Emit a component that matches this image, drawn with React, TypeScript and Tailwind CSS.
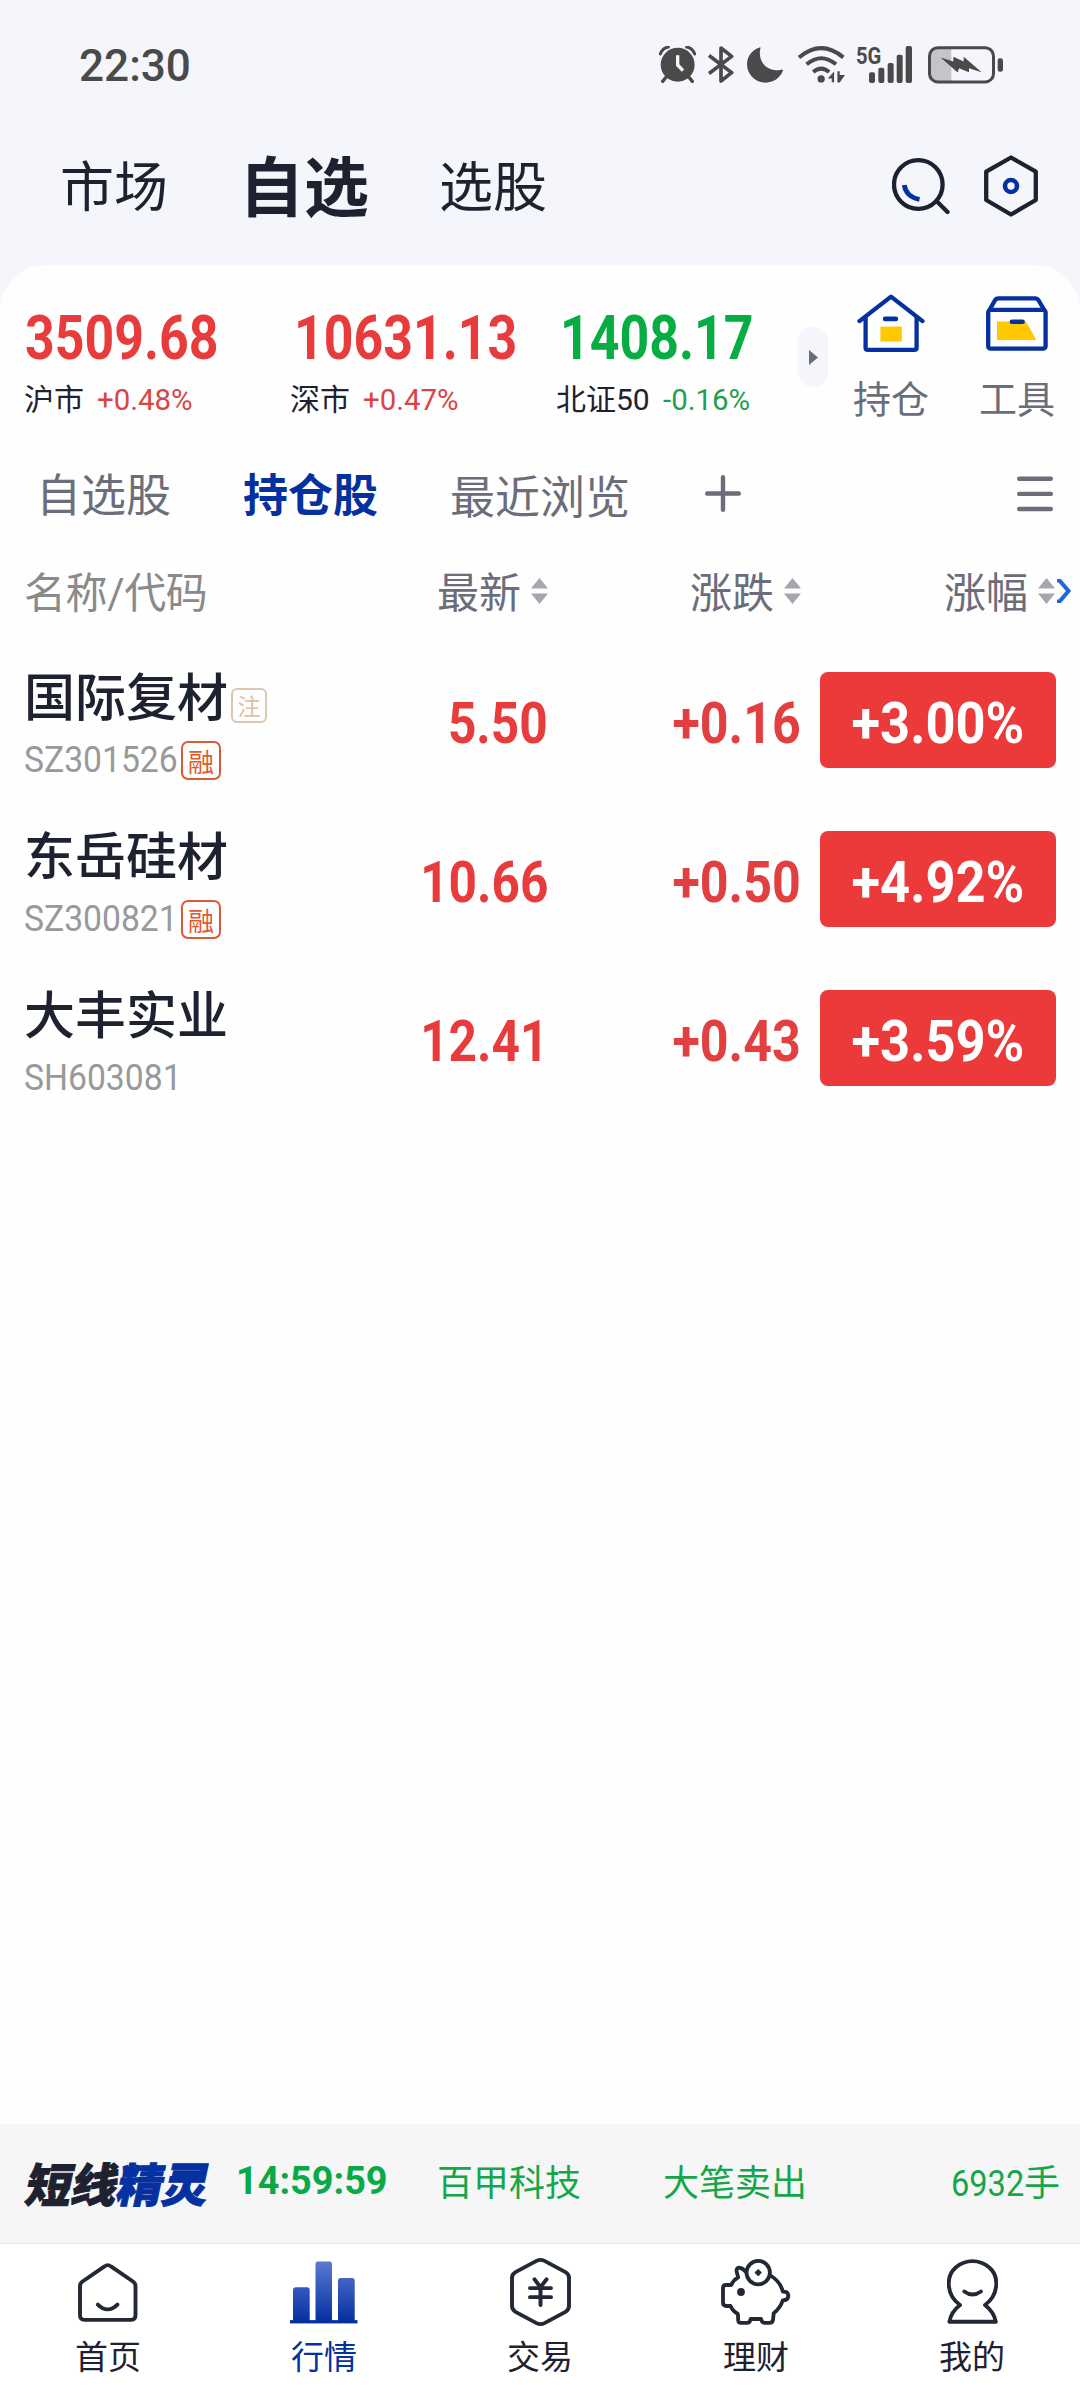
import type { ReactNode } from 'react'

const indices = [
  { value: '3509.68', name: '沪市', change: '+0.48%', up: true, indent: 'pl-px' },
  { value: '10631.13', name: '深市', change: '+0.47%', up: true, indent: 'pl-1' },
  { value: '1408.17', name: '北证50', change: '-0.16%', up: false, indent: 'pl-1' },
]

const stocks = [
  { name: '国际复材', code: 'SZ301526', note: true, margin: true, price: '5.50', diff: '+0.16', pct: '+3.00%' },
  { name: '东岳硅材', code: 'SZ300821', note: false, margin: true, price: '10.66', diff: '+0.50', pct: '+4.92%' },
  { name: '大丰实业', code: 'SH603081', note: false, margin: false, price: '12.41', diff: '+0.43', pct: '+3.59%' },
]

function StatusBar() {
  return (
    <div className="flex h-[129px] items-center text-[#4a4a4a]">
      <div className="w-[580px] pt-0.5 pl-[79px] text-[45px] leading-none font-medium">
        <span className="inline-block origin-left scale-x-[0.98]">22:30</span>
      </div>
      <div className="flex items-center pl-[79px]">
        {/* Alarm */}
        <svg width="37" height="37" viewBox="0 0 111 111" fill="none" stroke="currentColor">
          <circle cx="56" cy="56" r="51" fill="currentColor" stroke="none" />
          <path d="M4 24Q10 6 28 3M107 24Q101 6 83 3" strokeWidth="9" strokeLinecap="round" />
          <path d="M20 95L11 106M91 95L100 106" strokeWidth="10" strokeLinecap="round" />
          <path d="M56 28V57L72 74" stroke="#f5f6fb" strokeWidth="10" />
        </svg>
        {/* Bluetooth */}
        <svg className="ml-3" width="26" height="37" viewBox="0 0 76 111" fill="none" stroke="currentColor" strokeWidth="11" strokeLinejoin="round">
          <path d="M2 28L70 80L38 105V6L70 31L2 83" />
        </svg>
        {/* Moon */}
        <svg className="ml-[13px]" width="36" height="36" viewBox="0 0 108 108" fill="currentColor">
          <path d="M36 2Q42-1 40 5C31 44 62 78 102 68Q110 67 107 73C99 93 79 107 56 107C25 107 0 83 0 52C0 28 15 9 36 2Z" />
        </svg>
        {/* Wifi */}
        <svg className="ml-[15px]" width="47" height="37" viewBox="0 0 142 111" fill="none" stroke="currentColor" strokeWidth="12">
          <path d="M3 34Q70-22 137 34M26 55Q70 18 115 55M46 78Q70 58 94 78" />
          <circle cx="70" cy="99" r="11" fill="currentColor" stroke="none" />
          <path d="M90 98L109 77V109H102V98ZM119 76H126V87H142L126 110H119Z" fill="currentColor" stroke="none" />
        </svg>
        {/* 5G signal */}
        <svg className="ml-[11px] overflow-visible" width="57" height="37" viewBox="0 0 171 111" fill="currentColor">
          <text x="0" y="54" fontFamily="Roboto" fontWeight="700" fontSize="73" textLength="76" lengthAdjust="spacingAndGlyphs">5G</text>
          <rect x="39" y="79" width="18" height="32" rx="6" />
          <rect x="67" y="65" width="18" height="46" rx="6" />
          <rect x="95" y="51" width="18" height="60" rx="6" />
          <rect x="122" y="26" width="18" height="85" rx="6" />
          <rect x="149" y="0" width="19" height="111" rx="6" />
        </svg>
        {/* Battery */}
        <svg className="ml-[15px]" width="75" height="38" viewBox="0 0 225 113">
          <path d="M30 6H70V107H30Q6 107 6 83V30Q6 6 30 6Z" fill="#c4c4ca" />
          <rect x="4.5" y="4.5" width="192" height="103" rx="25" fill="none" stroke="currentColor" strokeWidth="9" />
          <path d="M38 34L76 46V32L107 46V32L161 78L123 66V78L93 66L89 79Z" fill="currentColor" />
          <rect x="209" y="36" width="16" height="41" rx="7" fill="currentColor" />
        </svg>
      </div>
    </div>
  )
}

function TopNav() {
  return (
    <div className="h-[136px] text-[#1e2130]">
      <div className="flex h-[120px] items-center">
        <span className="ml-[60px] w-[179px] text-[54px] leading-none">市场</span>
        <span className="w-[200px] text-[65px] leading-none font-bold">自选</span>
        <span className="w-[453px] text-[54px] leading-none">选股</span>
        <svg className="mb-1.5" width="58" height="56" viewBox="0 0 58 56" fill="none" strokeLinecap="round">
          <circle cx="26.3" cy="26.5" r="24.3" stroke="#1e2130" strokeWidth="4.3" />
          <path d="M44.5 43L55.5 54" stroke="#1e2130" strokeWidth="4.3" />
          <path d="M12.3 27Q14 39 27.5 41.3" stroke="#0530a0" strokeWidth="4.8" strokeLinecap="butt" />
        </svg>
        <svg className="mb-1.5 ml-[34px]" width="54" height="62" viewBox="0 0 54 62" fill="none">
          <path d="M27 2.5L51.8 16.7V45L27 59.5L2.2 45V16.7Z" stroke="#1e2130" strokeWidth="4.3" strokeLinejoin="round" />
          <circle cx="27" cy="31" r="6" stroke="#0530a0" strokeWidth="4.6" />
        </svg>
      </div>
    </div>
  )
}

function IndexStrip() {
  return (
    <div className="flex h-[194px] items-start">
      <div className="flex w-[798px] shrink-0 pl-6">
        {indices.map(item => (
          <div key={item.name} className="w-[266px] shrink-0 pt-[43px] last:w-[242px]">
            <div className={`text-[61px] leading-none font-bold ${item.indent} ${item.up ? 'text-[#e83c3c]' : 'text-[#05ad42]'}`}>
              <span className="inline-block origin-left scale-x-[0.85]">{item.value}</span>
            </div>
            <div className="mt-4 flex items-center text-[30px] leading-none whitespace-nowrap">
              <span className="text-[#1e2130]">{item.name}</span>
              <span className={`ml-[13px] inline-block origin-left scale-x-[0.98] ${item.up ? 'text-[#d94545]' : 'text-[#1fa04c]'}`}>
                {item.change}
              </span>
            </div>
          </div>
        ))}
      </div>
      <div className="mt-[62px] flex h-[60px] w-[30px] items-center justify-center rounded-full bg-[#f5f6fb]">
        <svg width="9" height="15" viewBox="0 0 9 15" fill="#6b6e7a">
          <path d="M0 0L9 7.5L0 15Z" />
        </svg>
      </div>
      <Shortcut label="持仓" className="ml-[24px]">
        <svg width="68" height="58" viewBox="0 0 68 60" preserveAspectRatio="none" fill="none" stroke="#0530a0" strokeWidth="4.3" strokeLinecap="round" strokeLinejoin="round">
          <path d="M2.5 28L34 2.8L65.5 28" />
          <path d="M8.6 24V55.5Q8.6 57.8 11 57.8H57.2Q59.6 57.8 59.6 55.5V24" />
          <path d="M23.4 33.7H44.8V49.2H23.4Z" fill="#ffc800" stroke="none" />
          <path d="M28.2 25.8H38.8" strokeWidth="4.8" />
        </svg>
      </Shortcut>
      <Shortcut label="工具" className="ml-[48px]">
        <svg width="62" height="58" viewBox="0 -2.5 62 60" preserveAspectRatio="none" fill="none" stroke="#0530a0" strokeWidth="4.3" strokeLinecap="round" strokeLinejoin="round">
          <path d="M3.5 14L9 4Q10 2 12.5 2H49Q51.3 2 52.5 4L58.3 14" />
          <rect x="2.2" y="14" width="57.4" height="40" rx="2.5" />
          <path d="M11 26H40L50.3 45H11Z" fill="#ffc800" stroke="none" />
          <path d="M26 26.2H36.5" strokeWidth="4.8" />
        </svg>
      </Shortcut>
    </div>
  )
}

function Shortcut({ label, className, children }: { label: string; className: string; children: ReactNode }) {
  return (
    <div className={`flex w-[78px] shrink-0 flex-col items-center pt-[29px] ${className}`}>
      {children}
      <span className="mt-[29px] text-[38px] leading-none whitespace-nowrap text-[#6b6e7a]">{label}</span>
    </div>
  )
}

function GroupTabs() {
  return (
    <div className="flex h-[75px] items-center text-[45px] leading-none text-[#6b6e7a]">
      <span className="ml-[36px] w-[207px]">自选股</span>
      <span className="w-[207px] font-bold text-[#0530a0]">持仓股</span>
      <span className="w-[255px] pt-1">最近浏览</span>
      <svg className="mb-1.5" width="36" height="37" viewBox="0 0 36 37" stroke="currentColor" strokeWidth="4.4" strokeLinecap="round">
        <path d="M2.2 18.5H33.8M18 2.2V34.8" />
      </svg>
      <svg className="mb-1.5 ml-[276px]" width="36" height="36" viewBox="0 0 36 36" stroke="currentColor" strokeWidth="4.4" strokeLinecap="round">
        <path d="M2.2 2.8H33.8M2.2 17.9H33.8M2.2 33H33.8" />
      </svg>
    </div>
  )
}

function SortIcon() {
  return (
    <svg className="mb-1.5 ml-2.5" width="17" height="26" viewBox="0 0 17 26" fill="#a5a7ae">
      <path d="M8.5 0L17 10.5H0ZM0 15.5H17L8.5 26Z" />
    </svg>
  )
}

function TableHead() {
  return (
    <div className="flex h-[108px] items-center pt-[11px] pl-6 text-[42px] leading-none whitespace-nowrap text-[#6b6e7a]">
      <span className="w-[413px] tracking-[-0.4px] text-[#8a8a8a]">名称/代码</span>
      <div className="flex w-[253px] items-center">最新<SortIcon /></div>
      <div className="flex w-[254px] items-center">涨跌<SortIcon /></div>
      <div className="flex items-center">涨幅<SortIcon /></div>
      <svg className="mb-1.5 ml-px" width="15" height="24" viewBox="0 0 15 24" fill="none" stroke="#1f68d0" strokeWidth="4">
        <path d="M1 1.5H3.5L12.5 12L3.5 22.5H1" />
      </svg>
    </div>
  )
}

function StockRow({ stock }: { stock: (typeof stocks)[number] }) {
  return (
    <div className="flex h-[159px] pl-6">
      <div className="w-[276px] pt-[31px]">
        <div className="flex h-[51px] items-start text-[51px] leading-none font-medium whitespace-nowrap text-[#1e2130]">
          {stock.name}
          {stock.note && (
            <span className="mt-[15px] ml-[3px] flex h-[35px] w-9 shrink-0 items-center justify-center rounded-md border-2 border-[#dcc6b0] pt-1 text-[23px] leading-none font-normal text-[#dcc0a4]">
              注
            </span>
          )}
        </div>
        <div className="mt-[17px] flex h-[39px] items-center">
          <div className="w-[157px] pb-0.5 text-[37px] leading-none whitespace-nowrap text-[#999999]">
            <span className="inline-block origin-left scale-x-[0.91]">{stock.code}</span>
          </div>
          {stock.margin && (
            <span className="flex h-[39px] w-10 items-center justify-center rounded-[7px] border-2 border-[#d95b36] pt-[5px] text-[26px] leading-none text-[#e05a30]">
              融
            </span>
          )}
        </div>
      </div>
      <div className="flex w-[248px] items-center justify-end pt-1 text-[57px] leading-none font-bold text-[#e83c3c]">
        <span className="origin-right scale-x-[0.87]">{stock.price}</span>
      </div>
      <div className="flex w-[253px] items-center justify-end pt-1 text-[57px] leading-none font-bold text-[#e24040]">
        <span className="origin-right scale-x-[0.88]">{stock.diff}</span>
      </div>
      <div className="mt-[30px] ml-[19px] flex h-24 w-[236px] items-center justify-center rounded-lg bg-[#ec3a3a] pt-[7px] text-[57px] leading-none font-bold text-white">
        <span className="scale-x-[0.92]">{stock.pct}</span>
      </div>
    </div>
  )
}

function Ticker() {
  return (
    <div className="flex h-[120px] items-center border-b border-[#e6e6e6] bg-[#f6f6f6] pl-6 text-[36px] leading-none whitespace-nowrap text-[#16a64a]">
      <div className="w-[212px] pt-1 pl-[3px] text-[46px] font-black tracking-[-0.5px] text-[#1e2130] [-webkit-text-stroke:1px]">
        <span className="inline-block -skew-x-12">
          短线<span className="text-[#0530a0]">精灵</span>
        </span>
      </div>
      <div className="w-[201px] pb-1 text-[39px] font-bold text-[#0aa945]">
        <span className="inline-block origin-left scale-x-[0.97]">14:59:59</span>
      </div>
      <span className="w-[226px]">百甲科技</span>
      <span className="w-[260px]">大笔卖出</span>
      <div className="flex w-[137px] items-center justify-end">
        <span className="origin-right scale-x-[0.88] text-[37px]">6932</span>
        <span>手</span>
      </div>
    </div>
  )
}

function TabItem({ label, active, children }: { label: string; active?: boolean; children: ReactNode }) {
  return (
    <div className={`flex w-[216px] flex-col items-center ${active ? 'text-[#0530a0]' : 'text-[#1e2130]'}`}>
      <div className="flex h-24 items-center justify-center">{children}</div>
      <span className="mt-px text-[33px] leading-none">{label}</span>
    </div>
  )
}

function BottomTabs() {
  return (
    <div className="flex h-36 bg-white">
      <TabItem label="首页">
        <svg width="60" height="59" viewBox="0 0 60 61" preserveAspectRatio="none" fill="none" stroke="#222935" strokeWidth="3.9" strokeLinecap="round">
          <path d="M2 24Q2 21 4.5 19.2L26.5 3.5Q29.7 1 33 3.5L55 19.2Q57.5 21 57.5 24V54Q57.5 58.7 53 58.7H6.5Q2 58.7 2 54Z" />
          <path d="M19.8 43Q29.5 53 39.5 43" />
        </svg>
      </TabItem>
      <TabItem label="行情" active>
        <svg width="68" height="63" viewBox="0 0 68 65" preserveAspectRatio="none">
          <defs>
            <linearGradient id="bars" gradientUnits="userSpaceOnUse" x1="0" y1="0" x2="0" y2="62">
              <stop offset="0" stopColor="#5b7bd2" />
              <stop offset="1" stopColor="#0530a0" />
            </linearGradient>
          </defs>
          <path d="M3 62V30Q3 27.2 6 27.2H17Q19.7 27.2 19.7 30V62ZM25.5 62V3Q25.5.5 28 .5H39.5Q42 .5 42 3V62ZM48 62V20.5Q48 17.6 51 17.6H62Q64.7 17.6 64.7 20.5V62Z" fill="url(#bars)" />
          <rect y="61" width="67.5" height="3.4" fill="#0530a0" />
        </svg>
      </TabItem>
      <TabItem label="交易">
        <svg width="61" height="68" viewBox="0 0 61 70" preserveAspectRatio="none" fill="none" stroke="#222935" strokeWidth="3.9" strokeLinecap="round">
          <path d="M26.5 3Q30.5 1 34.5 3L55.5 14.5Q59 16.5 59 20.5V49.5Q59 53.5 55.5 55.5L34.5 67Q30.5 69 26.5 67L5.5 55.5Q2 53.5 2 49.5V20.5Q2 16.5 5.5 14.5Z" />
          <path d="M24.5 22L30.5 30L36.5 22M20 31H41M20 40.3H41M30.5 30V48.5" strokeWidth="4" />
        </svg>
      </TabItem>
      <TabItem label="理财">
        <svg width="70" height="66" viewBox="0 0 70 66" fill="none" stroke="#222935" strokeWidth="3.8" strokeLinecap="round" strokeLinejoin="round">
          <path d="M49.5 16.5Q59.5 22.7 61.8 32.6Q67.5 32.4 67.3 37Q67 41.3 61.8 41.3Q59.5 48.9 52.7 54.2L52 61.2Q51.5 63.9 48.5 63.9H43.5Q41 63.9 40 60H29.6Q29 63.9 26 63.9H20Q17.5 63.9 17.2 61.2L16.9 55Q11.5 51.8 9.5 47H5Q2 46.7 2 43.6V29Q2 26 5 26H10.3Q12.5 20.8 17.2 18.4L15.6 12.6Q15.2 8.7 18 8.7Q22 9.2 25 13.2" />
          <circle cx="37.2" cy="13.6" r="11.7" />
          <circle cx="20" cy="33" r="3.9" fill="#222935" stroke="none" />
          <path d="M37.2 11.9V15.3M35.5 13.6H38.9" strokeWidth="3.4" />
        </svg>
      </TabItem>
      <TabItem label="我的">
        <svg width="51" height="66" viewBox="0 0 51 66" fill="none" stroke="#222935" strokeWidth="3.9" strokeLinecap="round" strokeLinejoin="round">
          <path d="M13 46C-1 36 -1.5 17 9 8.2C18.5 .1 32.5 .1 42 8.2C52.5 17 52 36 38 46Q47 53 48.8 62.8H2.4Q4 53 13 46" />
          <path d="M17.3 32.5Q25.5 38.5 34 32.5" />
        </svg>
      </TabItem>
    </div>
  )
}

export default function App() {
  return (
    <div className="flex h-[2388px] w-[1080px] flex-col overflow-hidden bg-[#f5f6fb] font-['Roboto','Noto_Sans_CJK_SC',sans-serif]">
      <StatusBar />
      <TopNav />
      <main className="flex-1 rounded-t-[46px] bg-[#fefefe]">
        <IndexStrip />
        <GroupTabs />
        <TableHead />
        {stocks.map(stock => (
          <StockRow key={stock.code} stock={stock} />
        ))}
      </main>
      <Ticker />
      <BottomTabs />
    </div>
  )
}
